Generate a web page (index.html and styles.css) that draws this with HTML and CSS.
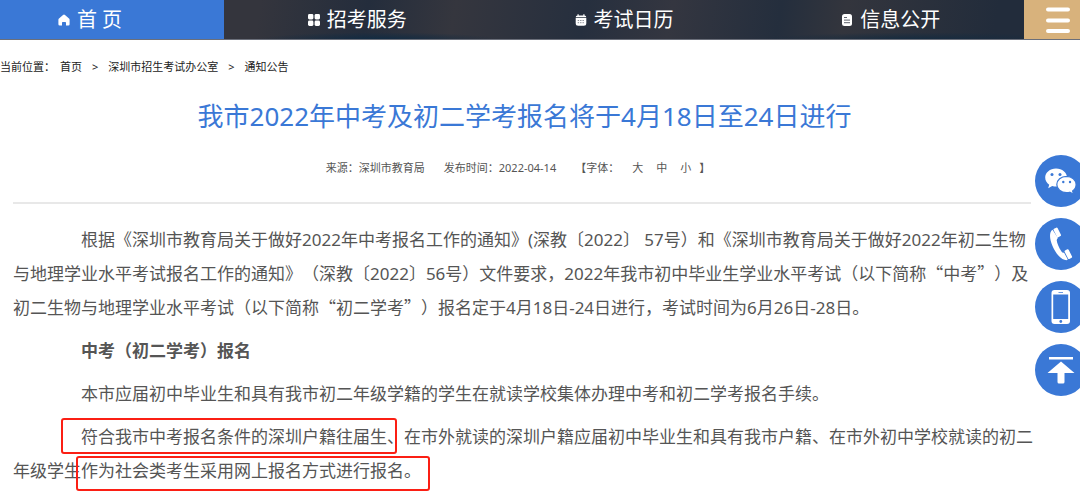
FILE: index.html
```html
<!DOCTYPE html>
<html lang="zh-CN">
<head>
<meta charset="utf-8">
<title>我市2022年中考及初二学考报名将于4月18日至24日进行</title>
<link rel="stylesheet" href="styles.css">
</head>
<body>
<nav class="nav">
  <a class="nav-item nav-home" href="#">
    <svg class="nav-icon" viewBox="0 0 12 12"><path fill="#fff" d="M5 .9q1-.8 2 0l4 3.500q.6.5.6 1.300v4.500q0 1.300-1.300 1.300H8V8.700q0-.7-.7-.7H4.700q-.7 0-.7.7v2.800H1.700Q.4 11.500.4 10.200V5.700q0-.8.6-1.300z"/></svg>
    <span>首 页</span>
  </a>
  <a class="nav-item" href="#">
    <svg class="nav-icon" viewBox="0 0 12 12" fill="#fff"><rect width="5.400" height="5.400" rx="1.400"/><rect x="6.600" width="5.400" height="5.400" rx="1.400"/><rect y="6.600" width="5.400" height="5.400" rx="1.400"/><rect x="6.600" y="6.600" width="5.400" height="5.400" rx="1.400"/></svg>
    <span>招考服务</span>
  </a>
  <a class="nav-item" href="#">
    <svg class="nav-icon" viewBox="0 0 12 12"><path fill="#fff" d="M.7 3.200Q.7 1.400 2.500 1.400V.3h1.200v1.100h4.600V.3h1.200v1.100q1.800 0 1.800 1.800zM.7 4.100h10.600v5.200q0 2.500-2.500 2.500H3.200Q.7 11.800.7 9.300z"/><path stroke="#8b8e96" stroke-width="1" stroke-dasharray="1.400 1" d="M2.700 6.500h6.600M2.700 8.700h6.600"/></svg>
    <span>考试日历</span>
  </a>
  <a class="nav-item" href="#">
    <svg class="nav-icon" viewBox="0 0 12 12"><rect x="1" width="10" height="12" rx="2.500" fill="#fff"/><path stroke="#5d626c" d="M3 3.500h3M3 6.100h6M3 8.700h6"/></svg>
    <span>信息公开</span>
  </a>
  <button class="menu" type="button" aria-label="菜单">
    <svg class="menu-icon" viewBox="0 0 26 28" stroke="#fff" stroke-width="4" stroke-linecap="round"><path d="M3 3.500h20M3 14.500h20M3 25h20"/></svg>
  </button>
</nav>

<div class="crumbs">
  <div><span>当前位置：</span><a href="#">首页</a></div><span>&gt;</span>
  <a href="#">深圳市招生考试办公室</a><span>&gt;</span>
  <a href="#">通知公告</a>
</div>

<main class="article">
  <h1 class="title">我市2022年中考及初二学考报名将于4月18日至24日进行</h1>
  <div class="meta">
    <span>来源：深圳市教育局</span>
    <span>发布时间：2022-04-14</span>
    <span class="sizes"><span>【字体：</span><a href="#">大</a><a href="#">中</a><a href="#">小</a><span class="sizes-end">】</span></span>
  </div>
  <div class="content">
    <p>根据《深圳市教育局关于做好2022年中考报名工作的通知》(深教〔2022〕 57号）和《深圳市教育局关于做好2022年初二生物<br>与地理学业水平考试报名工作的通知》（深教〔2022〕56号）文件要求，2022年我市初中毕业生学业水平考试（以下简称<span class="cjk">“中考”</span>）及<br>初二生物与地理学业水平考试（以下简称<span class="cjk">“初二学考”</span>）报名定于4月18日-24日进行，考试时间为6月26日-28日。</p>
    <p><strong>中考（初二学考）报名</strong></p>
    <p>本市应届初中毕业生和具有我市初二年级学籍的学生在就读学校集体办理中考和初二学考报名手续。</p>
    <p class="marked">符合我市中考报名条件的深圳户籍往届生、在市外就读的深圳户籍应届初中毕业生和具有我市户籍、在市外初中学校就读的初二<br>年级学生作为社会类考生采用网上报名方式进行报名。<span class="mark mark-first"></span><span class="mark mark-second"></span></p>
  </div>
</main>

<aside class="tools">
  <a class="tool" href="#" aria-label="微信"><svg viewBox="0 0 52 52"><path fill="#fff" d="M21 13.500c-6 0-10.800 4-10.800 9 0 3 1.500 5.500 4 7.200l-1 3.500 4-2.200q2 .6 4.300.6C27.500 31.500 32 27.500 32 22.500s-4.800-9-11-9z"/><path fill="#fff" stroke="#3a78d6" stroke-width="1.200" d="M31.500 21.300c-5.500 0-9.700 3.700-9.700 8.200s4.200 8.200 9.700 8.200q1.800 0 3.300-.5l3.800 2-1-3.200c2.200-1.500 3.500-3.800 3.500-6.500 0-4.500-4.200-8.200-9.600-8.200z"/><g fill="#3a78d6"><circle cx="17" cy="19.500" r="1.500"/><circle cx="25" cy="19.500" r="1.500"/><circle cx="28.300" cy="27" r="1.200"/><circle cx="35" cy="27" r="1.200"/></g></svg></a>
  <a class="tool" href="#" aria-label="电话"><svg viewBox="0 0 52 52"><path fill="#fff" d="M17.500 11.800C14 14 14.500 21 17.500 28c3.200 7.300 8.500 14 14 14.200l1.300-.7-3.700-6.700q-1.600.4-2.800-1.500c-2.300-3.500-4.300-8-4.600-11q0-1.600 1.300-2.400z"/><rect x="20" y="9.800" width="4.500" height="9.500" rx="1" transform="rotate(-27 22 14.500)" fill="#fff"/><rect x="31" y="31.500" width="4.500" height="9.500" rx="1" transform="rotate(-27 33 36)" fill="#fff"/></svg></a>
  <a class="tool" href="#" aria-label="手机"><svg viewBox="0 0 52 52"><rect x="16.500" y="9" width="18.500" height="34" rx="3" fill="#fff"/><path fill="#3a78d6" d="M18.200 13.500h15V38h-15zM23.500 11h4.500v.8h-4.500z"/><circle cx="25.800" cy="40.500" r="1.400" fill="#3a78d6"/></svg></a>
  <a class="tool" href="#" aria-label="返回顶部"><svg viewBox="0 0 52 52"><path fill="#fff" d="M14 13h24v2.500H14zM26 17.500l13.500 11.500h-10v9q0 1.500-1.500 1.500h-4q-1.500 0-1.500-1.500v-9h-10z"/></svg></a>
</aside>
</body>
</html>
```
FILE: styles.css
```css
* { box-sizing: border-box; }

body {
  margin: 0;
  overflow: hidden;
  background: #fff;
  color: #555;
  font-family: "Noto Sans", "Noto Sans CJK SC", sans-serif;
  text-spacing-trim: space-all;
}

a { color: inherit; text-decoration: none; }

.nav {
  display: flex;
  height: 40px;
  border-bottom: 1px solid #6b6f7a;
  background:
    radial-gradient(ellipse at 35% 100%, #122b42 0, transparent 12%),
    radial-gradient(ellipse at 85% 100%, #162b3f 0, transparent 12%),
    linear-gradient(100deg, #34353d 24%, #242d3c 34%, #35363e 42%, #262f3e 54%, #343640 62%, #242e3d 72%, #33353d 78%, #222c3b 92%);
}

.nav-item {
  flex: 1;
  display: flex;
  align-items: center;
  justify-content: center;
  gap: 7px;
  color: #fff;
  font-size: 20px;
  line-height: 39px;
}

.nav-home {
  flex: 0 0 224px;
  padding-right: 44px;
  background: #3a78d6;
}

.nav-icon { width: 12px; height: 12px; }

.menu {
  flex: 0 0 56px;
  padding: 0 0 0 12px;
  border: 0;
  background: #d8b27c;
}

.menu-icon { display: block; width: 26px; height: 28px; margin: 0 auto; }

.crumbs {
  display: flex;
  gap: 10px;
  padding-top: 18px;
  color: #222;
  font-size: 11px;
  line-height: 18px;
}

.crumbs div { display: flex; gap: 5px; }

.article { padding: 23px 49px 0 13px; }

.title {
  margin: 0;
  padding-left: 5px;
  color: #3a78d6;
  font-size: 26px;
  font-weight: 400;
  line-height: 34px;
  text-align: center;
}

.meta {
  display: flex;
  justify-content: center;
  gap: 19px;
  padding: 25px 8px 24px 0;
  border-bottom: 2px solid #e8e8e8;
  font-size: 11px;
  line-height: 20px;
}

.sizes a { margin-left: 13px; }
.sizes-end { margin-left: 8px; }

.content {
  padding-top: 19px;
  font-size: 17px;
  line-height: 34px;
  white-space: nowrap;
}

.content p { margin: 0 0 9px; text-indent: 4em; }

.cjk {
  font-family: "Noto Sans CJK SC", sans-serif;
  line-height: 1;
}

.marked { position: relative; }

.mark {
  position: absolute;
  border: 2px solid #fb1f14;
  border-radius: 3px;
}

.mark-first { left: 48px; top: -2px; width: 336px; height: 36px; }
.mark-second { left: 63px; top: 36px; width: 354px; height: 35px; }

.tools {
  position: fixed;
  top: 155px;
  right: -7px;
  display: flex;
  flex-direction: column;
  gap: 11px;
}

.tool {
  width: 52px;
  height: 52px;
  border-radius: 50%;
  background: #3a78d6;
}

.tool svg { display: block; }
```
